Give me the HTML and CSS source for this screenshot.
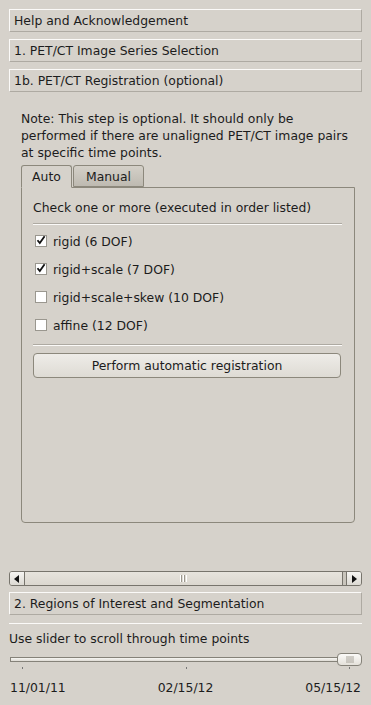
FILE: index.html
```html
<!DOCTYPE html>
<html>
<head>
<meta charset="utf-8">
<link rel="stylesheet" href="styles.css">
</head>
<body>
<div class="page">
  <div class="section-bar">Help and Acknowledgement</div>
  <div class="section-bar">1. PET/CT Image Series Selection</div>
  <div class="section-bar">1b. PET/CT Registration (optional)</div>

  <div class="content">
    <p class="note">Note: This step is optional. It should only be<br>performed if there are unaligned PET/CT image pairs<br>at specific time points.</p>

    <div class="tabs">
      <div class="tab active">Auto</div>
      <div class="tab">Manual</div>
    </div>
    <div class="tab-panel">
      <div class="panel-title">Check one or more (executed in order listed)</div>
      <div class="sep"></div>
      <div class="options">
        <label class="opt"><span class="box checked"><svg viewBox="0 0 12 12" width="12" height="12"><path d="M2.5 6.2 L4.8 9 L9.6 2.2" fill="none" stroke="#111" stroke-width="1.8"/></svg></span>rigid (6 DOF)</label>
        <label class="opt"><span class="box checked"><svg viewBox="0 0 12 12" width="12" height="12"><path d="M2.5 6.2 L4.8 9 L9.6 2.2" fill="none" stroke="#111" stroke-width="1.8"/></svg></span>rigid+scale (7 DOF)</label>
        <label class="opt"><span class="box"></span>rigid+scale+skew (10 DOF)</label>
        <label class="opt"><span class="box"></span>affine (12 DOF)</label>
      </div>
      <div class="sep"></div>
      <div class="button">Perform automatic registration</div>
    </div>
  </div>

  <div class="hscroll">
    <div class="arrow left"><svg width="6" height="8" viewBox="0 0 6 8"><path d="M5 0 L5 8 L0 4 Z" fill="#111"/></svg></div>
    <div class="thumb"><span class="grip"></span></div>
    <div class="track-end"></div>
    <div class="arrow right"><svg width="6" height="8" viewBox="0 0 6 8"><path d="M1 0 L1 8 L6 4 Z" fill="#111"/></svg></div>
  </div>

  <div class="section-bar">2. Regions of Interest and Segmentation</div>
  <div class="rule"></div>
  <div class="slider-label">Use slider to scroll through time points</div>

  <div class="slider">
    <div class="slider-track"></div>
    <div class="slider-thumb"><span class="dots"></span></div>
  </div>
  <div class="ticks">
    <span class="tick"></span><span class="tick"></span><span class="tick"></span>
  </div>
  <div class="dates">
    <span>11/01/11</span><span>02/15/12</span><span>05/15/12</span>
  </div>
</div>
</body>
</html>
```

FILE: styles.css
```css
* { box-sizing: border-box; }
html, body {
  margin: 0;
  padding: 0;
  background: #d6d2cb;
}
body {
  font-family: "DejaVu Sans", Verdana, sans-serif;
  font-size: 12.4px;
  color: #1c1c1c;
  width: 371px;
  height: 705px;
  overflow: hidden;
}
.page {
  padding: 9px 9px 0 9px;
  display: flex;
  flex-direction: column;
}
.section-bar {
  height: 23px;
  line-height: 22px;
  padding-left: 4px;
  border: 1px solid;
  border-color: #fbfaf8 #aeaaa2 #aeaaa2 #fbfaf8;
  margin-bottom: 7px;
  white-space: nowrap;
}
.content {
  padding: 11px 7px 0 12px;
}
.note {
  margin: 0;
  line-height: 17px;
  white-space: nowrap;
}
.tabs {
  display: flex;
  margin-top: 4px;
  height: 22px;
  position: relative;
  z-index: 1;
}
.tab {
  height: 23px;
  line-height: 21px;
  border: 1px solid #8c887c;
  border-radius: 3px 3px 0 0;
  text-align: center;
  background: linear-gradient(#d4d0c8, #bebab1);
  margin-right: 1px;
}
.tab.active {
  width: 51px;
  background: #d6d2cb;
  border-bottom-color: #d6d2cb;
}
.tab:not(.active) {
  width: 71px;
  height: 22px;
}
.tab-panel {
  border: 1px solid #8c887c;
  border-radius: 0 0 4px 4px;
  height: 336px;
  padding: 10px 12px 0 11px;
}
.panel-title {
  line-height: 20px;
  white-space: nowrap;
}
.sep {
  height: 2px;
  border-top: 1px solid #aeaaa2;
  border-bottom: 1px solid #fbfaf8;
  margin: 5px 0 0 0;
}
.options {
  display: flex;
  flex-direction: column;
  padding: 2px 0 0 0;
}
.opt {
  display: flex;
  align-items: center;
  height: 28px;
  white-space: nowrap;
}
.box {
  width: 12px;
  height: 12px;
  border: 1px solid #9a978f;
  background: #fff;
  margin: 0 6px 0 2px;
  position: relative;
  display: inline-block;
  flex: none;
}
.box svg {
  position: absolute;
  left: -1px;
  top: -2px;
}
.button {
  margin-top: 7px;
  height: 25px;
  border: 1px solid #8c887c;
  border-radius: 4px;
  background: linear-gradient(#eeece8, #dedbd4);
  text-align: center;
  line-height: 23px;
  margin-right: 1px;
}
.hscroll {
  margin-top: 48px;
  height: 15px;
  display: flex;
  border: 1px solid #77746c;
  border-radius: 3px;
  background: linear-gradient(#e9e6e0, #d2cec6);
  margin-bottom: 6px;
  overflow: hidden;
}
.arrow {
  width: 15px;
  flex: none;
  display: flex;
  align-items: center;
  justify-content: center;
  background: linear-gradient(#f6f5f2, #dcd9d2);
}
.arrow.left { border-right: 1px solid #77746c; }
.arrow.right { border-left: 1px solid #77746c; }
.thumb {
  flex: 1;
  display: flex;
  align-items: center;
  justify-content: center;
  background: linear-gradient(#e7e4dd, #dbd7cf);
}
.grip {
  width: 7px;
  height: 7px;
  background: repeating-linear-gradient(90deg, #fff 0 1px, #9b978d 1px 2px, transparent 2px 3px);
}
.track-end {
  width: 4px;
  flex: none;
  border-left: 1px solid #77746c;
  background: #c9c5bc;
}
.rule {
  height: 1px;
  background: #fbfaf8;
  margin: 1px 0 0 0;
}
.slider-label {
  line-height: 17px;
  margin-top: 6px;
  white-space: nowrap;
}
.slider {
  position: relative;
  height: 14px;
  margin-top: 6px;
}
.slider-track {
  position: absolute;
  left: 1px;
  right: 22px;
  top: 4px;
  height: 5px;
  border: 1px solid #858279;
  background: linear-gradient(#f7f6f3, #dedbd4);
}
.slider-thumb {
  position: absolute;
  right: 0;
  top: 0;
  width: 25px;
  height: 13px;
  border: 1px solid #858279;
  border-radius: 4px;
  background: linear-gradient(#fbfaf8, #e4e1da);
  display: flex;
  align-items: center;
  justify-content: center;
}
.dots {
  width: 8px;
  height: 7px;
  background: radial-gradient(circle, #a29e95 0 0.6px, transparent 0.8px) 0 0 / 2px 2px;
}
.ticks {
  display: flex;
  justify-content: space-between;
  padding: 0 12px 0 13px;
  height: 4px;
}
.tick {
  width: 1px;
  height: 2px;
  background: #777;
}
.dates {
  display: flex;
  justify-content: space-between;
  line-height: 17px;
  margin-top: 8px;
  padding: 0 1px;
}
```
